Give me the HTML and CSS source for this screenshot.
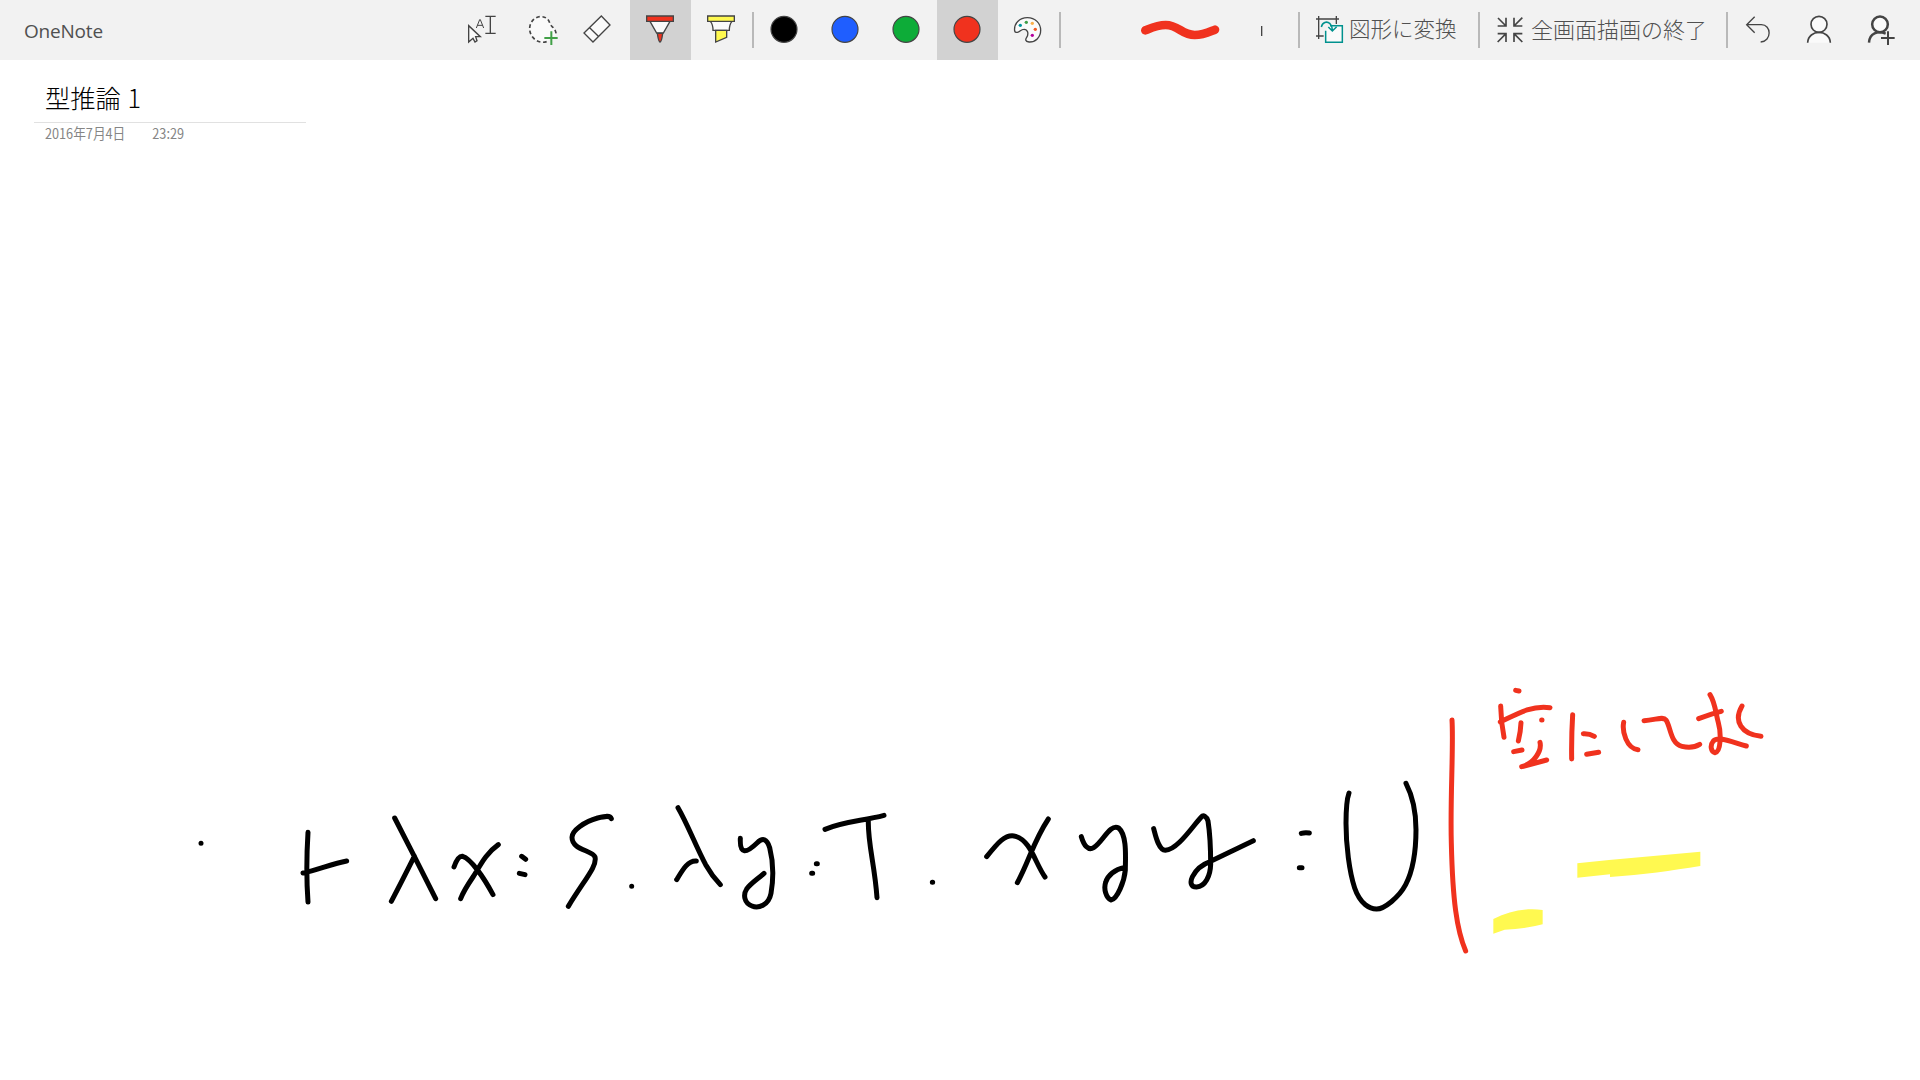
FILE: index.html
```html
<!DOCTYPE html>
<html lang="ja">
<head>
<meta charset="utf-8">
<title>OneNote</title>
<link rel="stylesheet" href="styles.css">
</head>
<body>
<header class="toolbar">
  <div class="app-name">OneNote</div>
  <div class="tool"><svg viewBox="33 0 183 180"><path class="line paper" d="M86 77V126L99 115L105 126L111 122L107 110H121Z"/><path class="line thin" d="M109 84L119 59H121L131 84M112 76H128"/><path class="line" d="M136 49H167M136 100H167M151 49V100"/></svg></div>
  <div class="tool"><svg viewBox="216 0 183 180"><path class="line dashed paper" d="M320 125C294 133 269 112 269 86C269 63 288 48 306 50C322 52 327 61 331 74C337 82 346 84 349 104"/><path class="plus" d="M313 114H353M334 94V135"/></svg></div>
  <div class="tool eraser"><svg viewBox="399 0 171 180"><path class="line paper" d="M432 99L484 48L510 75L459 126ZM449 83L475 109"/></svg></div>
  <div class="tool active"><svg viewBox="570 0 183 180"><path class="line paper" d="M630 64L650 99H670L690 64Z"/><path class="line red" d="M620 48H700V64H620ZM652 100H668C666 116 663 126 660 126C656 126 654 114 652 100Z"/></svg></div>
  <div class="tool"><svg viewBox="753 0 183 180"><path class="line paper" d="M811 64H876C869 72 868 79 868 91H819C819 79 818 72 811 64Z"/><path class="line yellow" d="M803 48H883V64H803ZM827 91H860V112L827 126Z"/></svg></div>
  <i class="divider"></i>
  <div class="tool"><svg viewBox="42 0 183 180"><circle class="line swatch black" cx="132" cy="88" r="39"/></svg></div>
  <div class="tool"><svg viewBox="225 0 183 180"><circle class="line swatch blue" cx="315" cy="88" r="39"/></svg></div>
  <div class="tool"><svg viewBox="408 0 183 180"><circle class="line swatch green" cx="498" cy="88" r="39"/></svg></div>
  <div class="tool active"><svg viewBox="591 0 183 180"><circle class="line swatch red" cx="681" cy="88" r="39"/></svg></div>
  <div class="tool"><svg viewBox="774 0 183 180"><path class="line paper" d="M824 93C821 70 839 53 862 53C886 53 902 70 902 91C902 112 886 127 867 126C855 125 856 118 860 112C867 101 863 87 851 88C843 88 840 96 832 97C827 98 825 97 824 93Z"/><g><circle cx="841" cy="76" r="5" fill="#00969b"/><circle cx="859" cy="67" r="5" fill="#3e9e47"/><circle cx="877" cy="70" r="5" fill="#fbae48"/><circle cx="886" cy="88" r="5" fill="#f15a24"/><circle cx="877" cy="106" r="5" fill="#b4009e"/></g></svg></div>
  <i class="divider"></i>
  <div class="thickness"><svg viewBox="3 0 711 180"><path class="sample" d="M256 91C278 82 292 75 317 75C356 75 365 105 404 105C430 105 445 97 465 89"/><path class="line" d="M605 78V108"/></svg></div>
  <i class="divider"></i>
  <div class="command convert">
    <svg viewBox="720 0 147 180"><path class="line" d="M776 48V117M768 57H837M829 48V72M768 108H791"/><path class="teal paper" d="M810 77H847V127H797V92"/><path class="teal" d="M784 81C787 67 800 62 810 71C815 76 817 83 817 92M805 81L817 93L830 80"/></svg>
    <span>図形に変換</span>
  </div>
  <i class="divider"></i>
  <div class="command exit">
    <svg viewBox="60 0 153 180"><path class="line arrows" d="M114 54L138 78M138 53V78H113M187 53L162 78M162 53V78H187M113 126L138 101M113 101H138V126M187 126L162 101M187 101H162V126"/></svg>
    <span>全画面描画の終了</span>
  </div>
  <i class="divider"></i>
  <div class="tool"><svg viewBox="804 0 183 180"><path class="line" d="M884 50L860 74L884 98M861 74H904C935 74 936 124 902 126"/></svg></div>
  <div class="tool"><svg viewBox="987 0 183 180"><path class="paper" d="M1043 128C1045 87 1109 87 1111 128Z"/><circle class="line person paper" cx="1077" cy="73" r="24"/><path class="line person" d="M1043 128C1045 87 1109 87 1111 128"/></svg></div>
  <div class="tool"><svg viewBox="1170 0 183 180"><circle class="line share paper" cx="1260" cy="73" r="23.5"/><path class="line share" d="M1227 128C1228 99 1254 91 1277 101"/><path class="line add" d="M1263 114H1304M1284 94V135"/></svg></div>
</header>
<main class="page">
  <section class="note-head">
    <h1>型推論 1</h1>
    <div class="stamp"><span>2016年7月4日</span><span>23:29</span></div>
  </section>
  <svg class="ink" viewBox="0 660 1920 420">
    <g transform="translate(180 760) scale(.33333)">
      <path d="M63 250h.1M384 217Q377 330 384 426M369 339C410 331 455 312 500 303M644 174L703 289L767 416M703 289Q665 365 634 424M822 321C827 307 836 287 848 289C872 296 910 350 939 404M955 254C914 283 899 321 879 351C862 376 849 397 842 416M1025 289L1037 298M1018 340L1035 344M1294 176C1290 165 1277 168 1253 174C1213 185 1176 212 1176 232C1176 271 1237 270 1245 291C1252 319 1214 358 1165 439M1355 379h.1"/>
    </g>
    <g transform="translate(620 760) scale(.33333)">
      <path d="M174 143C203 193 226 255 257 314Q275 346 301 374M170 359C187 331 203 301 229 303M361 235C359 285 379 280 411 249C428 232 441 236 449 263C459 302 461 354 453 400C446 437 414 446 396 438C372 429 369 404 380 387C391 371 412 358 432 340M589 311h3M575 340h3M615 208C672 184 728 183 792 166M745 181C743 249 764 313 771 413M937 367h1"/>
    </g>
    <g transform="translate(960 760) scale(.33333)">
      <path d="M80 290C112 250 136 220 167 229C213 243 225 309 255 351M265 177C219 246 208 303 172 368M364 230C372 257 385 273 401 263C429 245 450 190 476 204C502 226 496 294 496 330C493 364 472 417 453 420C439 414 430 388 437 367C443 346 464 328 494 322M581 206C586 224 595 270 616 271C653 269 698 198 724 171C730 164 740 169 744 183C751 227 752 276 752 313C751 347 736 380 710 381C675 382 697 324 752 304L880 242M1024 220Q1035 217 1048 219M1018 323h8M1167 99C1162 113 1158 147 1158 190C1158 255 1168 336 1184 384C1201 434 1231 447 1249 447C1272 448 1317 412 1337 374C1359 331 1368 266 1368 209C1368 149 1353 99 1338 70"/>
    </g>
    <g transform="translate(1420 670) scale(.33333)">
      <path class="red-ink" d="M96 150C101 230 90 390 94 520C98 690 110 780 137 843M287 61L297 63M242 108Q243 157 252 202M241 156C290 132 335 105 390 113M303 158Q302 184 295 213M365 150h1M281 245L306 240M360 217C366 242 342 281 305 290L380 270M458 134Q454 200 455 267M490 191Q508 190 523 199M500 253L536 247M611 157C606 184 619 235 654 239M672 152C708 150 729 138 738 150C752 169 751 221 786 229Q818 236 839 223M870 74C886 99 887 130 895 158C904 190 903 246 885 248C873 246 869 226 880 213C895 197 933 215 979 228M836 146Q875 131 904 124M966 108C939 154 965 193 1023 199"/>
      <path class="marker" d="M472 580L567 570L841 545V588C755 602 669 614 570 621V613L472 623ZM220 747C270 722 318 714 368 720V763Q311 778 254 779L220 791Z"/>
    </g>
  </svg>
</main>
</body>
</html>
```
FILE: styles.css
```css
* { box-sizing: border-box; }
body {
  margin: 0;
  height: 1080px;
  display: flex;
  flex-direction: column;
  overflow: hidden;
  background: #fff;
  font-family: "Noto Sans CJK JP", sans-serif;
}
.toolbar {
  display: flex;
  align-items: center;
  height: 60px;
  flex: none;
  background: #f2f2f2;
  color: #505050;
}
.app-name {
  width: 451px;
  padding: 2px 0 0 24px;
  font: 19px "Open Sans", sans-serif;
  letter-spacing: -.2px;
}
.tool { width: 61px; height: 60px; flex: none; }
.eraser { width: 57px; }
.active { background: #d2d2d2; }
svg { display: block; width: 100%; height: 100%; fill: none; }
.divider { width: 2px; height: 36px; flex: none; background: #b9b9b9; }
.thickness { width: 237px; height: 60px; flex: none; }
.command {
  display: flex;
  height: 60px;
  flex: none;
  font-size: 21.5px;
  font-weight: 300;
  line-height: 56px;
  white-space: nowrap;
}
.command svg { flex: none; }
.convert { width: 178px; }
.convert svg { width: 49px; }
.exit { width: 246px; }
.exit svg { width: 51px; }
.exit span { font-size: 22px; }

.line { stroke: #444; stroke-width: 4; }
.thin { stroke-width: 3; }
.dashed { stroke-width: 5; stroke-dasharray: 11 8; }
.plus { stroke: #41a047; stroke-width: 6; }
.arrows { stroke-width: 5; }
.person { stroke-width: 5; }
.share { stroke-width: 7.5; }
.add { stroke-width: 6; }
.paper { fill: #fafafa; }
.teal { stroke: #00918e; stroke-width: 4.5; }
.swatch { stroke-width: 3.5; }
.black { fill: #000; }
.blue { fill: #1f5eff; }
.green { fill: #0dac38; }
.red { fill: #f0321e; }
.yellow { fill: #fff950; }
.sample { stroke: #f0321e; stroke-width: 26; stroke-linecap: round; }

.page {
  flex: 1;
  display: flex;
  flex-direction: column;
  justify-content: space-between;
}
.note-head { width: 272px; margin-left: 34px; }
h1 {
  margin: 0;
  height: 63px;
  padding: 19px 0 0 11px;
  border-bottom: 1px solid #e1e1e1;
  font-size: 25.3px;
  line-height: 36px;
  font-weight: 300;
  word-spacing: 1px;
  color: #000;
}
.stamp {
  display: flex;
  gap: 27px;
  padding: 1px 0 0 11px;
  font-size: 12.7px;
  line-height: 18px;
  color: #858585;
  transform: scaleY(1.12);
}
.ink { width: 1920px; height: 420px; flex: none; }
.ink path {
  stroke: #000;
  stroke-width: 15;
  stroke-linecap: round;
  stroke-linejoin: round;
}
.ink .red-ink { stroke: #f0321e; }
.ink .marker { stroke: none; fill: #fff950; }
```
